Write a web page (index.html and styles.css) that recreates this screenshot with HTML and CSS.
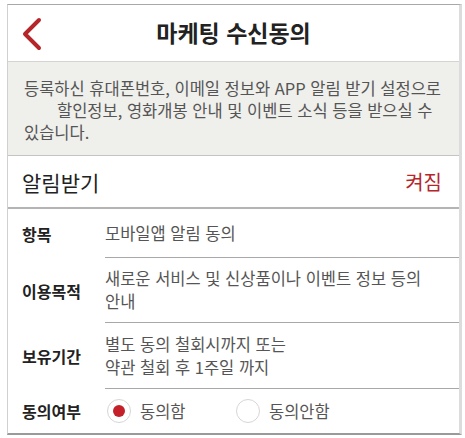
FILE: index.html
```html
<!DOCTYPE html>
<html lang="ko">
<head>
<meta charset="utf-8">
<link rel="stylesheet" href="styles.css">
</head>
<body>
<div class="frame">
  <header class="header">
    <svg class="back" width="24" height="34" viewBox="0 0 24 34"><polyline points="19,3 5,17 19,31" fill="none" stroke="#b5262b" stroke-width="4" stroke-linecap="round" stroke-linejoin="round"/></svg>
    <h1 class="title">마케팅 수신동의</h1>
  </header>
  <div class="notice">
    <div class="nline">등록하신 휴대폰번호, 이메일 정보와 APP 알림 받기 설정으로</div>
    <div class="nline indent">할인정보, 영화개봉 안내 및 이벤트 소식 등을 받으실 수</div>
    <div class="nline">있습니다.</div>
  </div>
  <div class="toggle-row">
    <span class="toggle-label">알림받기</span>
    <span class="toggle-state">켜짐</span>
  </div>
  <div class="table">
    <div class="row r1">
      <div class="label">항목</div>
      <div class="value">모바일앱 알림 동의</div>
    </div>
    <div class="row r2">
      <div class="label">이용목적</div>
      <div class="value">새로운 서비스 및 신상품이나 이벤트 정보 등의<br>안내</div>
    </div>
    <div class="row r3">
      <div class="label">보유기간</div>
      <div class="value">별도 동의 철회시까지 또는<br>약관 철회 후 1주일 까지</div>
    </div>
    <div class="row r4">
      <div class="label">동의여부</div>
      <div class="value radios">
        <span class="radio"><span class="circle on"></span>동의함</span>
        <span class="radio"><span class="circle"></span>동의안함</span>
      </div>
    </div>
  </div>
</div>
</body>
</html>
```

FILE: styles.css
```css
* { box-sizing: border-box; margin: 0; padding: 0; }
html, body { background: #fff; }
body {
  font-family: "Noto Sans CJK KR", "Noto Sans", sans-serif;
  color: #222;
}
.frame {
  margin: 4px 0 0 7px;
  width: 455px;
  height: 431px;
  border-top: 1px solid #a8a8a8;
  border-left: 1px solid #d0d0d0;
  border-right: 3px solid #dcdcdc;
  border-bottom: 2px solid #9a9a9a;
  display: flex;
  flex-direction: column;
}
.header {
  height: 57px;
  display: flex;
  align-items: center;
  justify-content: center;
  position: relative;
  border-bottom: 1px solid #d4d4d0;
}
.back {
  position: absolute;
  left: 12px;
  top: 12px;
}
.title {
  font-size: 23px;
  font-weight: 700;
  color: #222;
  margin-top: -2px;
}
.notice {
  background: #efefeb;
  height: 94px;
  padding: 15px 0 0 16px;
  border-bottom: 1px solid #c4c4c0;
  font-size: 16.5px;
  line-height: 22px;
  color: #555;
}
.nline { white-space: nowrap; }
.nline.indent { padding-left: 33px; }
.toggle-row {
  height: 53px;
  display: flex;
  align-items: center;
  justify-content: space-between;
  padding: 0 17px 0 14px;
  border-bottom: 2px solid #b4b4b4;
}
.toggle-label { font-size: 21px; color: #222; }
.toggle-state { font-size: 20px; color: #b5262b; }
.table { flex: 1; display: flex; flex-direction: column; }
.row { display: grid; grid-template-columns: 97px 1fr; }
.label {
  padding-left: 14px;
  font-size: 16px;
  font-weight: 700;
  color: #222;
  display: flex;
  align-items: center;
}
.value {
  display: flex;
  flex-direction: column;
  justify-content: center;
  font-size: 16.5px;
  line-height: 23px;
  color: #555;
  border-bottom: 1px solid #a8a8a8;
}
.r1 { height: 49px; }
.r2 { height: 65px; }
.r3 { height: 66px; }
.r4 { flex: 1; }
.r4 .value { border-bottom: none; }
.radios { flex-direction: row; align-items: center; justify-content: flex-start; }
.radio { display: flex; align-items: center; gap: 9px; width: 129px; }
.circle {
  width: 24px;
  height: 24px;
  border-radius: 50%;
  border: 1px solid #d6d6d6;
  display: flex;
  align-items: center;
  justify-content: center;
  margin-left: 2px;
}
.circle.on::after {
  content: "";
  width: 12px;
  height: 12px;
  border-radius: 50%;
  background: #c4202a;
}
```
